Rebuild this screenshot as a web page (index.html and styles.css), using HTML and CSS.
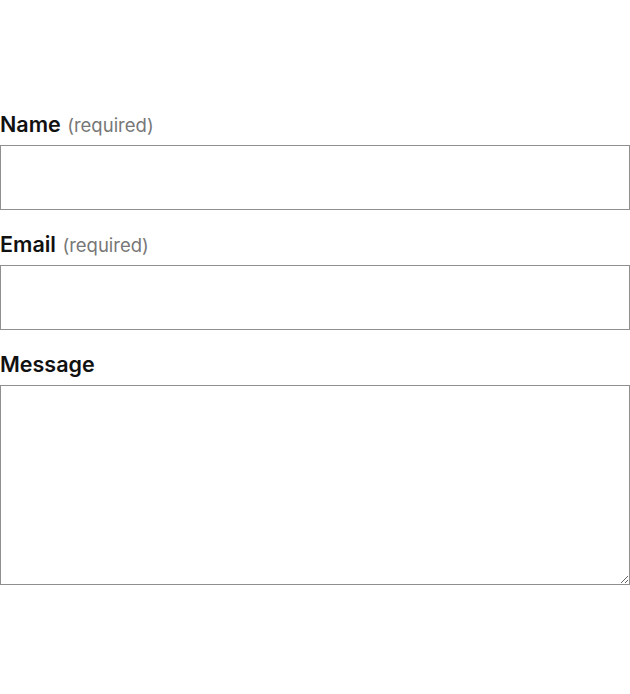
FILE: index.html
```html
<!DOCTYPE html>
<html>
<head>
<meta charset="utf-8">
<link rel="stylesheet" href="styles.css">
</head>
<body>
<form class="form">
  <div class="field">
    <label class="label" for="name">Name <span class="req">(required)</span></label>
    <input class="input" id="name" type="text">
  </div>
  <div class="field">
    <label class="label" for="email">Email <span class="req">(required)</span></label>
    <input class="input" id="email" type="email">
  </div>
  <div class="field">
    <label class="label" for="msg">Message</label>
    <textarea class="textarea" id="msg"></textarea>
  </div>
</form>
</body>
</html>
```

FILE: styles.css
```css
html, body {
  margin: 0;
  padding: 0;
  background: #fff;
}
body {
  font-family: Inter, "Noto Sans", sans-serif;
  color: #111;
}
.form {
  padding-top: 110px;
  display: flex;
  flex-direction: column;
  gap: 20px;
}
.field {
  display: flex;
  flex-direction: column;
}
.label {
  display: block;
  font-size: 21.5px;
  font-weight: 600;
  line-height: 28px;
  height: 28px;
  margin-bottom: 7px;
}
.req {
  font-size: 18.5px;
  font-weight: 400;
  line-height: 1;
  color: #777;
  margin-left: 1px;
}
.input, .textarea {
  box-sizing: border-box;
  width: 100%;
  border: 1px solid #8f8f8f;
  border-radius: 0;
  margin: 0;
  font-family: inherit;
  font-size: 18px;
  background: #fff;
}
.input {
  height: 65px;
}
.textarea {
  height: 200px;
  resize: vertical;
  display: block;
}
```
